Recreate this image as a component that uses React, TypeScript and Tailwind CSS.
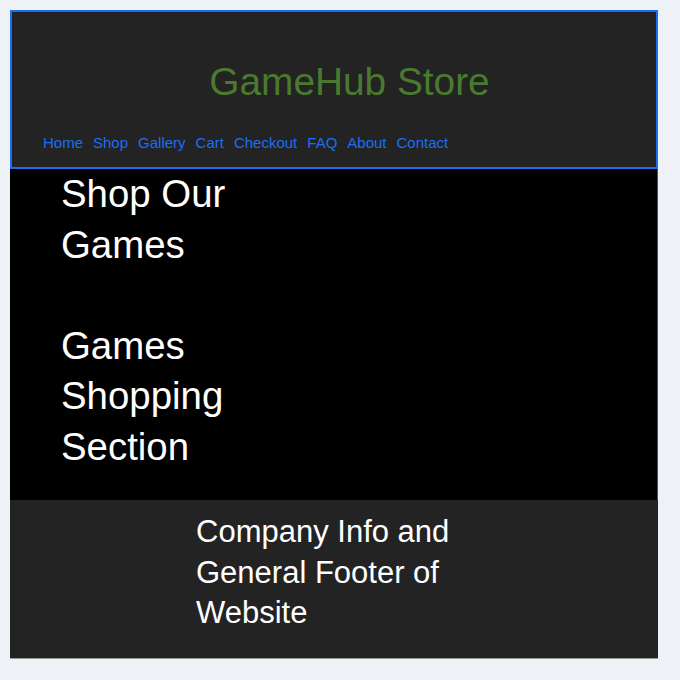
import React from "react";

export default function App() {
  const links = ["Home", "Shop", "Gallery", "Cart", "Checkout", "FAQ", "About", "Contact"];
  return (
    <div className="min-h-[680px] w-[680px] bg-[#eef1f6] p-[10px] pr-[22px]" style={{ fontFamily: '"Liberation Sans", Arial, sans-serif' }}>
      <div className="flex w-[648px] flex-col border-b border-[#9a9a9a]">
        <header className="flex h-[159px] flex-col border-2 border-[#1a6ef5] bg-[#232323]">
          <div className="flex h-[105px] items-end justify-center pb-[13px] pl-[31px]">
            <h1 className="text-[38.8px] leading-[44px] text-[#4a7a2f]">GameHub Store</h1>
          </div>
          <nav className="flex gap-[10px] pl-[31px] pt-[17px] text-[15px] leading-[18px] text-[#1a6ef5]">
            {links.map((l) => (
              <a key={l} href="#">{l}</a>
            ))}
          </nav>
        </header>
        <main className="h-[331px] border-r border-[#555] bg-black pl-[51px] text-white">
          <div className="w-[220px] text-[38.4px] leading-[50.5px]">
            <h2>Shop Our Games</h2>
            <p className="mt-[50.5px]">Games Shopping Section</p>
          </div>
        </main>
        <footer className="h-[158px] bg-[#232323] pl-[186px] pt-[12px] text-white">
          <p className="w-[265px] text-[31px] leading-[40.5px]">Company Info and General Footer of Website</p>
        </footer>
      </div>
    </div>
  );
}
